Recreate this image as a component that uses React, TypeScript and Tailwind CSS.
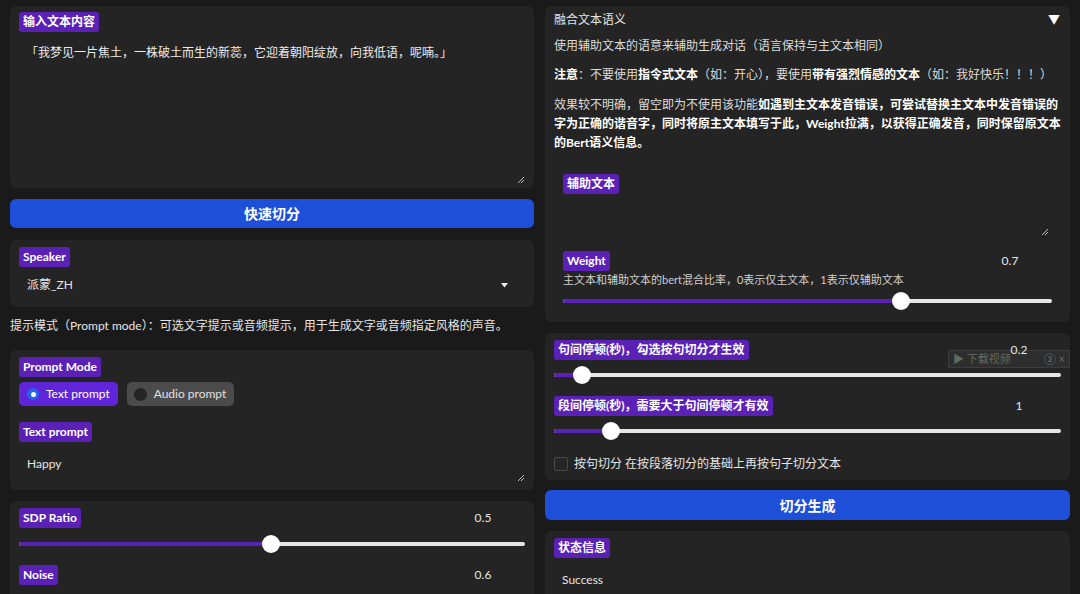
import type { ReactNode } from 'react';

const font = { fontFamily: 'Lato, "Noto Sans CJK SC", sans-serif' };

function Label({ children }: { children: ReactNode }) {
  return (
    <span className="block h-[20px] w-fit rounded-[3px] bg-[#5b21b6] px-[4px] text-[12px] font-bold leading-[20px] text-white">
      {children}
    </span>
  );
}

function Panel({ className = '', children }: { className?: string; children: ReactNode }) {
  return <div className={`relative shrink-0 rounded-[6px] bg-[#242424] ${className}`}>{children}</div>;
}

function ResizeHandle({ className }: { className: string }) {
  return (
    <svg className={`absolute ${className}`} width="8" height="8" viewBox="0 0 8 8">
      <path d="M7 1 L1 7 M7 4 L4 7" stroke="#bdbdbd" strokeWidth="1" />
    </svg>
  );
}

function Slider({ pct }: { pct: number }) {
  return (
    <div className="relative flex h-[20px] items-center">
      <div className="h-[4px] w-full rounded-full bg-[#e6e6e6]" />
      <div className="absolute left-0 h-[4px] rounded-full bg-[#5b21b6]" style={{ width: `${pct}%` }} />
      <div
        className="absolute h-[18px] w-[18px] rounded-full bg-white"
        style={{ left: `calc(${pct}% - 9px)` }}
      />
    </div>
  );
}

function SliderHead({ label, value }: { label: string; value: string }) {
  return (
    <div className="flex items-center justify-between">
      <Label>{label}</Label>
      <span className="mr-[12px] w-[60px] text-center text-[12px] text-[#e5e5e5]">{value}</span>
    </div>
  );
}

export default function App() {
  return (
    <div
      className="flex h-[594px] gap-[11px] overflow-hidden bg-[#1a1a1a] px-[10px] pt-[6px] text-[#e5e5e5]"
      style={font}
    >
      {/* left column */}
      <div className="flex w-[524px] shrink-0 flex-col">
        <Panel className="h-[182px] px-[9px] pt-[6px]">
          <Label>输入文本内容</Label>
          <p className="mt-[12px] pl-[7px] text-[12px] leading-[18px] text-[#ececec]">
            「我梦见一片焦土，一株破土而生的新蕊，它迎着朝阳绽放，向我低语，呢喃。」
          </p>
          <ResizeHandle className="right-[9px] bottom-[4px]" />
        </Panel>

        <button
          type="button"
          className="mt-[11px] h-[29px] shrink-0 rounded-[6px] bg-[#1d4fd8] text-[14px] font-bold text-white"
        >
          快速切分
        </button>

        <Panel className="mt-[12px] h-[67px] px-[9px] pt-[7px]">
          <Label>Speaker</Label>
          <div className="mt-[9px] flex items-center justify-between pl-[8px] pr-[17px]">
            <span className="text-[12px] leading-[18px]">派蒙_ZH</span>
            <svg width="7" height="5" viewBox="0 0 7 5">
              <path d="M0 0 H7 L3.5 4.5 Z" fill="#f2f2f2" />
            </svg>
          </div>
        </Panel>

        <p className="mt-[10px] mb-[15px] shrink-0 text-[12px] leading-[18px] text-[#e5e5e5]">
          提示模式（Prompt mode）：可选文字提示或音频提示，用于生成文字或音频指定风格的声音。
        </p>

        <Panel className="h-[140px] px-[9px] pt-[7px]">
          <Label>Prompt Mode</Label>
          <div className="mt-[5px] flex gap-[9px]">
            <div className="flex h-[24px] items-center gap-[7px] whitespace-nowrap rounded-[5px] bg-[#6025d9] pl-[8px] pr-[8px] text-[12px] text-white">
              <span className="flex h-[12px] w-[12px] items-center justify-center rounded-full bg-[#2563eb]">
                <span className="h-[5px] w-[5px] rounded-full bg-white" />
              </span>
              Text prompt
            </div>
            <div className="flex h-[24px] items-center gap-[7px] whitespace-nowrap rounded-[5px] bg-[#4b4b4b] pl-[7px] pr-[8px] text-[12px] text-[#e0e0e0]">
              <span className="h-[13px] w-[13px] rounded-full bg-[#242424]" />
              Audio prompt
            </div>
          </div>
          <div className="mt-[16px]">
            <Label>Text prompt</Label>
          </div>
          <p className="mt-[13px] pl-[8px] text-[12px] leading-[18px]">Happy</p>
          <ResizeHandle className="right-[9px] bottom-[8px]" />
        </Panel>

        <Panel className="mt-[11px] h-[120px] px-[9px] pt-[7px]">
          <SliderHead label="SDP Ratio" value="0.5" />
          <div className="mt-[6px]">
            <Slider pct={49.9} />
          </div>
          <div className="mt-[11px]">
            <SliderHead label="Noise" value="0.6" />
          </div>
          <div className="mt-[8px]">
            <Slider pct={26.9} />
          </div>
        </Panel>
      </div>

      {/* right column */}
      <div className="flex w-[525px] shrink-0 flex-col">
        <Panel className="h-[316px] px-[9px] pt-[5px]">
          <div className="flex items-center justify-between pr-[1px]">
            <span className="text-[12px] leading-[18px]">融合文本语义</span>
            <span className="text-[12px] leading-[18px] text-white">▼</span>
          </div>
          <p className="mt-[8px] text-[12px] leading-[18px] text-[#dcdcdc]">
            使用辅助文本的语意来辅助生成对话（语言保持与主文本相同）
          </p>
          <p className="mt-[11px] text-[12px] leading-[18px] text-[#dcdcdc]">
            <b className="text-white">注意</b>：不要使用<b className="text-white">指令式文本</b>（如：开心），要使用
            <b className="text-white">带有强烈情感的文本</b>（如：我好快乐！！！）
          </p>
          <p className="-mr-[8px] mt-[11px] text-[12px] leading-[19px] text-[#dcdcdc]">
            效果较不明确，留空即为不使用该功能
            <b className="text-white">
              如遇到主文本发音错误，可尝试替换主文本中发音错误的字为正确的谐音字，同时将原主文本填写于此，Weight拉满，以获得正确发音，同时保留原文本的Bert语义信息。
            </b>
          </p>
          <div className="mt-[22px] px-[9px]">
            <Label>辅助文本</Label>
            <div className="relative h-[48px]">
              <ResizeHandle className="right-[3px] bottom-[6px]" />
            </div>
            <div className="mt-[9px]">
              <SliderHead label="Weight" value="0.7" />
            </div>
            <p className="mt-[2px] text-[11px] leading-[14px] text-[#cfcfcf]">
              主文本和辅助文本的bert混合比率，0表示仅主文本，1表示仅辅助文本
            </p>
            <div className="mt-[4px]">
              <Slider pct={69.2} />
            </div>
          </div>
        </Panel>

        <Panel className="mt-[11px] h-[147px] px-[9px] pt-[7px]">
          <div className="absolute top-[17px] left-[403px] flex h-[18px] w-[122px] items-center gap-[6px] border border-[#3c3c3c] bg-[#2e2e2e] px-[4px] text-[11px] text-[#5f6b5f]">
            <span>▶ 下载视频</span>
            <span className="ml-auto text-[#6a6a6a]">② ×</span>
          </div>
          <div className="relative">
            <SliderHead label="句间停顿(秒)，勾选按句切分才生效" value="0.2" />
          </div>
          <div className="mt-[5px]">
            <Slider pct={5.5} />
          </div>
          <div className="mt-[11px]">
            <SliderHead label="段间停顿(秒)，需要大于句间停顿才有效" value="1" />
          </div>
          <div className="mt-[5px]">
            <Slider pct={11.2} />
          </div>
          <label className="mt-[14px] flex h-[18px] items-center gap-[6px] text-[12px]">
            <span className="h-[14px] w-[14px] rounded-[2px] border border-[#4a4a4a] bg-[#262626]" />
            按句切分 在按段落切分的基础上再按句子切分文本
          </label>
        </Panel>

        <button
          type="button"
          className="mt-[10px] h-[30px] shrink-0 rounded-[6px] bg-[#1d4fd8] text-[14px] font-bold text-white"
        >
          切分生成
        </button>

        <Panel className="mt-[11px] h-[80px] px-[9px] pt-[7px]">
          <Label>状态信息</Label>
          <p className="mt-[13px] pl-[8px] text-[12px] leading-[18px]">Success</p>
        </Panel>
      </div>
    </div>
  );
}
